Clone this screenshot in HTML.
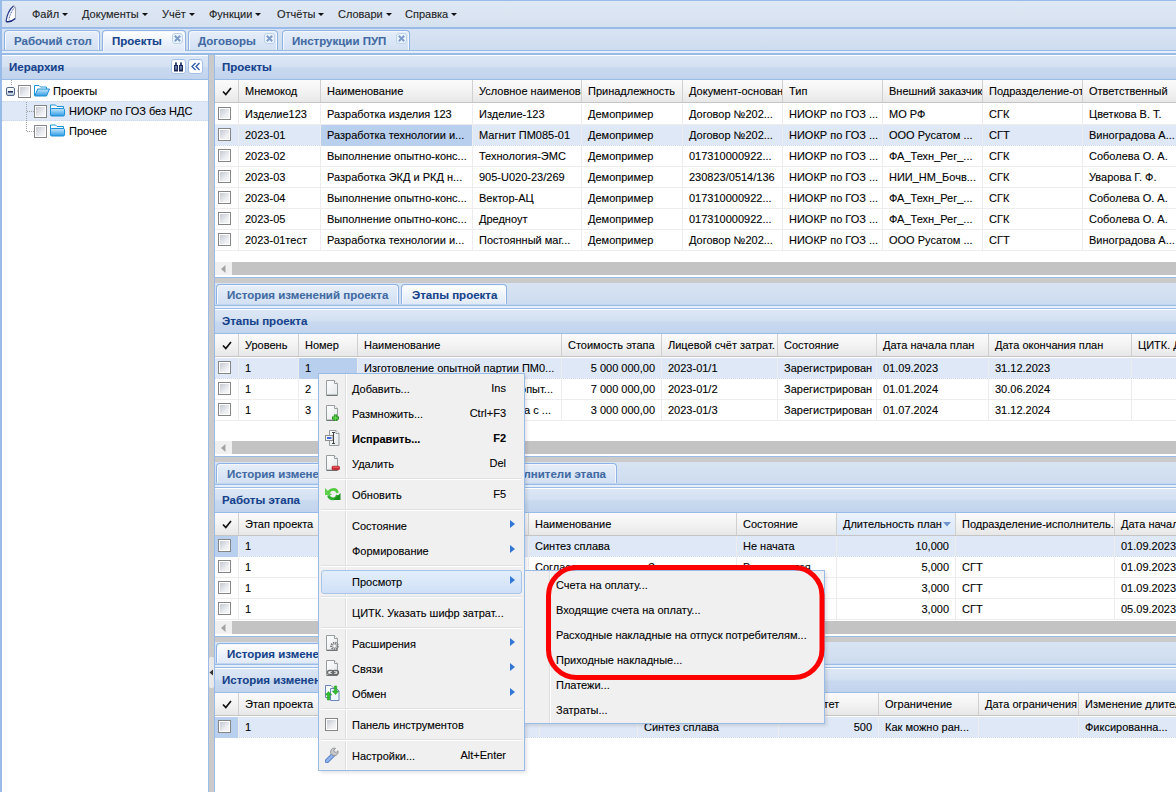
<!DOCTYPE html><html><head><meta charset="utf-8"><title>UI</title><style>
*{margin:0;padding:0;box-sizing:border-box}
html,body{width:1176px;height:792px;overflow:hidden;background:#fff}
body{position:relative;font-family:"Liberation Sans",sans-serif;font-size:11px;color:#000;-webkit-text-stroke:0.1px currentColor}
div{position:absolute}
.t{white-space:nowrap}
.ph{background:linear-gradient(#dce7f5 0%,#d4e1f2 45%,#c8d9ef 52%,#c2d4ed 100%);border-top:1px solid #fff;border-bottom:1px solid #99bbe8}
.pht{font-weight:bold;font-size:11.5px;color:#15428b;white-space:nowrap}
.gh{background:linear-gradient(#fbfbfb 0%,#f3f3f3 50%,#e7e7e7 100%);border-bottom:1px solid #c5c5c5}
.cb{width:13px;height:13px;border:1px solid #858585;background:#fff}
.cb:after{content:"";position:absolute;left:1px;top:1px;width:9px;height:9px;background:linear-gradient(135deg,#c5c9d1,#eceef1 65%,#f7f7f7)}
.tab{border:1px solid #8db2e3;border-bottom:none;border-radius:4px 4px 0 0;background:linear-gradient(#e6eef9,#d2e0f3);box-shadow:inset 1px 1px 0 #f4f8fd,inset -1px 0 0 #f4f8fd}
.tab.act{background:linear-gradient(#ffffff 0%,#eaf1fb 60%,#dfe8f6 100%)}
.tabt{font-weight:bold;font-size:11.5px;color:#416aa3;white-space:nowrap}
.act .tabt{color:#15428b}
.hs{width:1px;background:#d0d0d0}
.rs{width:1px;background:#ededed}
.sel{background:#dfe8f6}
.selc{background:#b8cfee}
.c{white-space:nowrap;overflow:hidden}
.arr{display:inline-block;width:0;height:0;border-left:3px solid transparent;border-right:3px solid transparent;border-top:3.5px solid #111;margin-left:3px;vertical-align:middle;position:relative;top:-1px}
.mi{white-space:nowrap;color:#000}
.sc{white-space:nowrap;text-align:right}
.subarr{width:0;height:0;border-top:4.5px solid transparent;border-bottom:4.5px solid transparent;border-left:5px solid #3277d6}
</style></head><body><div style="left:0px;top:0px;width:1176px;height:27px;background:linear-gradient(#dfe8f5,#d6e1ef);border-top:1px solid #99bbe8"></div>
<div style="left:0px;top:27px;width:1176px;height:2px;background:#99bbe8"></div>
<div style="left:0px;top:29px;width:1176px;height:21px;background:linear-gradient(#d8e4f3,#cddcef)"></div>
<div style="left:0px;top:50px;width:1176px;height:1px;background:#99bbe8"></div>
<div style="left:0px;top:51px;width:1176px;height:2px;background:#e6eef9"></div>
<div style="left:0px;top:53px;width:1176px;height:2px;background:#99bbe8"></div>
<div style="left:0px;top:0px;width:2px;height:792px;background:#99bbe8"></div>
<svg style="position:absolute;left:3px;top:4px" width="16" height="20" viewBox="0 0 16 20"><path d="M10.5 2 C7 5 4 10 3 17.5 C6 17.8 9 16.8 12 14.5 C12.6 10 12.8 5 10.5 2Z" fill="#fff"/><path d="M10.3 1.8 C12 2 12.6 3 12.6 5 L12.3 14.5" fill="none" stroke="#9aa0b0" stroke-width="1"/><path d="M10.5 2 C7 5 4 10 3 17.5" fill="none" stroke="#2b3f8f" stroke-width="1.3"/><path d="M11.5 3.5 C9 6.5 6.5 11 6 15.5" fill="none" stroke="#4d62b0" stroke-width="1" stroke-dasharray="1.2 0.6"/><path d="M3 17.5 C6 18.2 9.5 17 12.3 14.5" fill="none" stroke="#1c2b80" stroke-width="1.5"/></svg>
<div class="t" style="left:32px;top:8px;line-height:13px;color:#222">Файл<span class="arr"></span></div>
<div class="t" style="left:82px;top:8px;line-height:13px;color:#222">Документы<span class="arr"></span></div>
<div class="t" style="left:162px;top:8px;line-height:13px;color:#222">Учёт<span class="arr"></span></div>
<div class="t" style="left:209px;top:8px;line-height:13px;color:#222">Функции<span class="arr"></span></div>
<div class="t" style="left:277px;top:8px;line-height:13px;color:#222">Отчёты<span class="arr"></span></div>
<div class="t" style="left:338px;top:8px;line-height:13px;color:#222">Словари<span class="arr"></span></div>
<div class="t" style="left:405px;top:8px;line-height:13px;color:#222">Справка<span class="arr"></span></div>
<div class="tab" style="left:4px;top:30px;width:96px;height:20px;"><div class="tabt" style="left:9px;top:4px;line-height:13px">Рабочий стол</div></div>
<div class="tab act" style="left:102px;top:30px;width:84px;height:21px;"><div class="tabt" style="left:9px;top:4px;line-height:13px">Проекты</div><div style="left:69px;top:2px;width:11px;height:11px;border:1px solid #bcd1ee;border-radius:3px;background:#eef4fc"><svg style="position:absolute;left:1px;top:1px" width="7" height="7" viewBox="0 0 7 7"><path d="M0.8 0.8L6.2 6.2M6.2 0.8L0.8 6.2" stroke="#7d9dcc" stroke-width="2"/></svg></div></div>
<div class="tab" style="left:188px;top:30px;width:90px;height:20px;"><div class="tabt" style="left:9px;top:4px;line-height:13px">Договоры</div><div style="left:75px;top:2px;width:11px;height:11px;border:1px solid #bcd1ee;border-radius:3px;background:#eef4fc"><svg style="position:absolute;left:1px;top:1px" width="7" height="7" viewBox="0 0 7 7"><path d="M0.8 0.8L6.2 6.2M6.2 0.8L0.8 6.2" stroke="#7d9dcc" stroke-width="2"/></svg></div></div>
<div class="tab" style="left:282px;top:30px;width:128px;height:20px;"><div class="tabt" style="left:9px;top:4px;line-height:13px">Инструкции ПУП</div><div style="left:113px;top:2px;width:11px;height:11px;border:1px solid #bcd1ee;border-radius:3px;background:#eef4fc"><svg style="position:absolute;left:1px;top:1px" width="7" height="7" viewBox="0 0 7 7"><path d="M0.8 0.8L6.2 6.2M6.2 0.8L0.8 6.2" stroke="#7d9dcc" stroke-width="2"/></svg></div></div>
<div class="ph" style="left:2px;top:55px;width:206px;height:25px;"><div class="pht" style="left:7px;top:4px;line-height:14px">Иерархия</div></div>
<div style="left:208px;top:55px;width:1px;height:737px;background:#99bbe8"></div>
<div style="left:171px;top:59px;width:15px;height:15px;border:1px solid #a3c0e8;border-radius:3px;background:#fff"><svg style="position:absolute;left:2px;top:2px" width="10" height="10" viewBox="0 0 10 10"><path d="M1 0.5h2v2.5h1v6.5h-4v-6.5h1zM6 0.5h2v2.5h1v6.5h-4v-6.5h1z" fill="#1d2a58"/><path d="M1.5 4h1v3.5h-1zM6.5 4h1v3.5h-1z" fill="#a9c2f2"/><path d="M1.5 1.2h1v1.5h-1zM6.5 1.2h1v1.5h-1z" fill="#6f8fd8"/></svg></div>
<div style="left:188px;top:59px;width:15px;height:15px;border:1px solid #a3c0e8;border-radius:3px;background:#fff"><svg style="position:absolute;left:1px;top:2px" width="12" height="10" viewBox="0 0 12 10"><path d="M5.5 1L2 4.5L5.5 8M9.5 1L6 4.5L9.5 8" fill="none" stroke="#2c5ba8" stroke-width="1.3"/></svg></div>
<div style="left:2px;top:101px;width:206px;height:20px;background:#dfe8f6;border-top:1px dotted #cdd9ea;border-bottom:1px dotted #cdd9ea"></div>
<svg style="position:absolute;left:2px;top:80px" width="206" height="60" viewBox="0 0 206 60"><path d="M9.5 0v6M24.5 22v30M25 31.5h7M25 51.5h7M15 11h2" stroke="#a0a0a0" stroke-width="1" stroke-dasharray="1 1" fill="none"/></svg>
<div style="left:6px;top:87px;width:9px;height:9px;border:1px solid #56688a;background:linear-gradient(#ffffff,#e4ebf4 50%,#b9c7dc);border-radius:2px"><div style="left:1px;top:3px;width:5px;height:1px;background:#1d2f58;box-shadow:0 1px 0 #6a7896"></div></div>
<div class="cb" style="left:18px;top:85px"></div>
<svg style="position:absolute;left:34px;top:84px" width="16" height="13" viewBox="0 0 16 13"><defs><linearGradient id="fgr" x1="0" y1="0" x2="0" y2="1"><stop offset="0" stop-color="#c6e8fc"/><stop offset="1" stop-color="#2f9be6"/></linearGradient></defs><path d="M0.5 11.5v-10h4.5l1.5 1.5h6v2.5" fill="#fff" stroke="#1b93d6"/><path d="M0.7 12l3-7h11.8l-3 7z" fill="url(#fgr)" stroke="#1b8fd6" stroke-linejoin="round"/></svg>
<div class="t" style="left:53px;top:85px;line-height:13px;">Проекты</div>
<div class="cb" style="left:34px;top:105px"></div>
<svg style="position:absolute;left:50px;top:104px" width="16" height="13" viewBox="0 0 16 13"><defs><linearGradient id="fgr" x1="0" y1="0" x2="0" y2="1"><stop offset="0" stop-color="#c6e8fc"/><stop offset="1" stop-color="#2f9be6"/></linearGradient></defs><path d="M0.5 11v-10h5l1.5 1.5h6.5v3" fill="#fff" stroke="#1b93d6"/><rect x="0.5" y="4.5" width="14" height="7.5" rx="1.2" fill="url(#fgr)" stroke="#1b8fd6"/></svg>
<div class="t" style="left:69px;top:105px;line-height:13px;">НИОКР по ГОЗ без НДС</div>
<div class="cb" style="left:34px;top:125px"></div>
<svg style="position:absolute;left:50px;top:124px" width="16" height="13" viewBox="0 0 16 13"><defs><linearGradient id="fgr" x1="0" y1="0" x2="0" y2="1"><stop offset="0" stop-color="#c6e8fc"/><stop offset="1" stop-color="#2f9be6"/></linearGradient></defs><path d="M0.5 11v-10h5l1.5 1.5h6.5v3" fill="#fff" stroke="#1b93d6"/><rect x="0.5" y="4.5" width="14" height="7.5" rx="1.2" fill="url(#fgr)" stroke="#1b8fd6"/></svg>
<div class="t" style="left:69px;top:125px;line-height:13px;">Прочее</div>
<div style="left:209px;top:55px;width:5px;height:737px;background:#cacaca"></div>
<div style="left:214px;top:55px;width:1px;height:737px;background:#99bbe8"></div>
<div class="ph" style="left:215px;top:55px;width:961px;height:25px;"><div class="pht" style="left:7px;top:4px;line-height:14px">Проекты</div></div>
<div class="gh" style="left:215px;top:80px;width:961px;height:23px;"></div>
<div style="left:215px;top:80px;width:23px;height:23px"><svg style="position:absolute;left:7px;top:7px" width="10" height="9" viewBox="0 0 10 9"><path d="M1 4.5L3.8 7.5L9 1" fill="none" stroke="#111" stroke-width="1.7"/></svg></div>
<div class="hs" style="left:238px;top:80px;height:22px"></div>
<div class="c" style="left:239px;top:85px;width:81px;line-height:13px;padding-left:6px">Мнемокод</div>
<div class="hs" style="left:320px;top:80px;height:22px"></div>
<div class="c" style="left:321px;top:85px;width:151px;line-height:13px;padding-left:6px">Наименование</div>
<div class="hs" style="left:472px;top:80px;height:22px"></div>
<div class="c" style="left:473px;top:85px;width:108px;line-height:13px;padding-left:6px">Условное наименование</div>
<div class="hs" style="left:581px;top:80px;height:22px"></div>
<div class="c" style="left:582px;top:85px;width:100px;line-height:13px;padding-left:6px">Принадлежность</div>
<div class="hs" style="left:682px;top:80px;height:22px"></div>
<div class="c" style="left:683px;top:85px;width:99px;line-height:13px;padding-left:6px">Документ-основание</div>
<div class="hs" style="left:782px;top:80px;height:22px"></div>
<div class="c" style="left:783px;top:85px;width:99px;line-height:13px;padding-left:6px">Тип</div>
<div class="hs" style="left:882px;top:80px;height:22px"></div>
<div class="c" style="left:883px;top:85px;width:99px;line-height:13px;padding-left:6px">Внешний заказчик</div>
<div class="hs" style="left:982px;top:80px;height:22px"></div>
<div class="c" style="left:983px;top:85px;width:99px;line-height:13px;padding-left:6px">Подразделение-ответственный</div>
<div class="hs" style="left:1082px;top:80px;height:22px"></div>
<div class="c" style="left:1083px;top:85px;width:93px;line-height:13px;padding-left:6px">Ответственный</div>
<div style="left:215px;top:124px;width:961px;height:1px;background:#ededed"></div>
<div class="cb" style="left:218px;top:107px"></div>
<div class="rs" style="left:238px;top:104px;height:20px"></div>
<div class="c" style="left:239px;top:108px;width:81px;line-height:13px;padding-left:6px">Изделие123</div>
<div class="rs" style="left:320px;top:104px;height:20px"></div>
<div class="c" style="left:321px;top:108px;width:151px;line-height:13px;padding-left:6px">Разработка изделия 123</div>
<div class="rs" style="left:472px;top:104px;height:20px"></div>
<div class="c" style="left:473px;top:108px;width:108px;line-height:13px;padding-left:6px">Изделие-123</div>
<div class="rs" style="left:581px;top:104px;height:20px"></div>
<div class="c" style="left:582px;top:108px;width:100px;line-height:13px;padding-left:6px">Демопример</div>
<div class="rs" style="left:682px;top:104px;height:20px"></div>
<div class="c" style="left:683px;top:108px;width:99px;line-height:13px;padding-left:6px">Договор №202...</div>
<div class="rs" style="left:782px;top:104px;height:20px"></div>
<div class="c" style="left:783px;top:108px;width:99px;line-height:13px;padding-left:6px">НИОКР по ГОЗ ...</div>
<div class="rs" style="left:882px;top:104px;height:20px"></div>
<div class="c" style="left:883px;top:108px;width:99px;line-height:13px;padding-left:6px">МО РФ</div>
<div class="rs" style="left:982px;top:104px;height:20px"></div>
<div class="c" style="left:983px;top:108px;width:99px;line-height:13px;padding-left:6px">СГК</div>
<div class="rs" style="left:1082px;top:104px;height:20px"></div>
<div class="c" style="left:1083px;top:108px;width:93px;line-height:13px;padding-left:6px">Цветкова В. Т.</div>
<div style="left:215px;top:125px;width:961px;height:20px;background:#dfe8f6"></div>
<div style="left:215px;top:145px;width:961px;height:1px;background:repeating-linear-gradient(90deg,#cbd8ea 0 1px,#f4f7fb 1px 2px)"></div>
<div style="left:321px;top:125px;width:151px;height:21px;background:#b8cfee"></div>
<div class="cb" style="left:218px;top:128px"></div>
<div class="rs" style="left:238px;top:125px;height:20px"></div>
<div class="c" style="left:239px;top:129px;width:81px;line-height:13px;padding-left:6px">2023-01</div>
<div class="rs" style="left:320px;top:125px;height:20px"></div>
<div class="c" style="left:321px;top:129px;width:151px;line-height:13px;padding-left:6px">Разработка технологии и...</div>
<div class="rs" style="left:472px;top:125px;height:20px"></div>
<div class="c" style="left:473px;top:129px;width:108px;line-height:13px;padding-left:6px">Магнит ПМ085-01</div>
<div class="rs" style="left:581px;top:125px;height:20px"></div>
<div class="c" style="left:582px;top:129px;width:100px;line-height:13px;padding-left:6px">Демопример</div>
<div class="rs" style="left:682px;top:125px;height:20px"></div>
<div class="c" style="left:683px;top:129px;width:99px;line-height:13px;padding-left:6px">Договор №202...</div>
<div class="rs" style="left:782px;top:125px;height:20px"></div>
<div class="c" style="left:783px;top:129px;width:99px;line-height:13px;padding-left:6px">НИОКР по ГОЗ ...</div>
<div class="rs" style="left:882px;top:125px;height:20px"></div>
<div class="c" style="left:883px;top:129px;width:99px;line-height:13px;padding-left:6px">ООО Русатом ...</div>
<div class="rs" style="left:982px;top:125px;height:20px"></div>
<div class="c" style="left:983px;top:129px;width:99px;line-height:13px;padding-left:6px">СГТ</div>
<div class="rs" style="left:1082px;top:125px;height:20px"></div>
<div class="c" style="left:1083px;top:129px;width:93px;line-height:13px;padding-left:6px">Виноградова А...</div>
<div style="left:215px;top:166px;width:961px;height:1px;background:#ededed"></div>
<div class="cb" style="left:218px;top:149px"></div>
<div class="rs" style="left:238px;top:146px;height:20px"></div>
<div class="c" style="left:239px;top:150px;width:81px;line-height:13px;padding-left:6px">2023-02</div>
<div class="rs" style="left:320px;top:146px;height:20px"></div>
<div class="c" style="left:321px;top:150px;width:151px;line-height:13px;padding-left:6px">Выполнение опытно-конс...</div>
<div class="rs" style="left:472px;top:146px;height:20px"></div>
<div class="c" style="left:473px;top:150px;width:108px;line-height:13px;padding-left:6px">Технология-ЭМС</div>
<div class="rs" style="left:581px;top:146px;height:20px"></div>
<div class="c" style="left:582px;top:150px;width:100px;line-height:13px;padding-left:6px">Демопример</div>
<div class="rs" style="left:682px;top:146px;height:20px"></div>
<div class="c" style="left:683px;top:150px;width:99px;line-height:13px;padding-left:6px">017310000922...</div>
<div class="rs" style="left:782px;top:146px;height:20px"></div>
<div class="c" style="left:783px;top:150px;width:99px;line-height:13px;padding-left:6px">НИОКР по ГОЗ ...</div>
<div class="rs" style="left:882px;top:146px;height:20px"></div>
<div class="c" style="left:883px;top:150px;width:99px;line-height:13px;padding-left:6px">ФА_Техн_Рег_...</div>
<div class="rs" style="left:982px;top:146px;height:20px"></div>
<div class="c" style="left:983px;top:150px;width:99px;line-height:13px;padding-left:6px">СГК</div>
<div class="rs" style="left:1082px;top:146px;height:20px"></div>
<div class="c" style="left:1083px;top:150px;width:93px;line-height:13px;padding-left:6px">Соболева О. А.</div>
<div style="left:215px;top:187px;width:961px;height:1px;background:#ededed"></div>
<div class="cb" style="left:218px;top:170px"></div>
<div class="rs" style="left:238px;top:167px;height:20px"></div>
<div class="c" style="left:239px;top:171px;width:81px;line-height:13px;padding-left:6px">2023-03</div>
<div class="rs" style="left:320px;top:167px;height:20px"></div>
<div class="c" style="left:321px;top:171px;width:151px;line-height:13px;padding-left:6px">Разработка ЭКД и РКД н...</div>
<div class="rs" style="left:472px;top:167px;height:20px"></div>
<div class="c" style="left:473px;top:171px;width:108px;line-height:13px;padding-left:6px">905-U020-23/269</div>
<div class="rs" style="left:581px;top:167px;height:20px"></div>
<div class="c" style="left:582px;top:171px;width:100px;line-height:13px;padding-left:6px">Демопример</div>
<div class="rs" style="left:682px;top:167px;height:20px"></div>
<div class="c" style="left:683px;top:171px;width:99px;line-height:13px;padding-left:6px">230823/0514/136</div>
<div class="rs" style="left:782px;top:167px;height:20px"></div>
<div class="c" style="left:783px;top:171px;width:99px;line-height:13px;padding-left:6px">НИОКР по ГОЗ ...</div>
<div class="rs" style="left:882px;top:167px;height:20px"></div>
<div class="c" style="left:883px;top:171px;width:99px;line-height:13px;padding-left:6px">НИИ_НМ_Бочв...</div>
<div class="rs" style="left:982px;top:167px;height:20px"></div>
<div class="c" style="left:983px;top:171px;width:99px;line-height:13px;padding-left:6px">СГК</div>
<div class="rs" style="left:1082px;top:167px;height:20px"></div>
<div class="c" style="left:1083px;top:171px;width:93px;line-height:13px;padding-left:6px">Уварова Г. Ф.</div>
<div style="left:215px;top:208px;width:961px;height:1px;background:#ededed"></div>
<div class="cb" style="left:218px;top:191px"></div>
<div class="rs" style="left:238px;top:188px;height:20px"></div>
<div class="c" style="left:239px;top:192px;width:81px;line-height:13px;padding-left:6px">2023-04</div>
<div class="rs" style="left:320px;top:188px;height:20px"></div>
<div class="c" style="left:321px;top:192px;width:151px;line-height:13px;padding-left:6px">Выполнение опытно-конс...</div>
<div class="rs" style="left:472px;top:188px;height:20px"></div>
<div class="c" style="left:473px;top:192px;width:108px;line-height:13px;padding-left:6px">Вектор-АЦ</div>
<div class="rs" style="left:581px;top:188px;height:20px"></div>
<div class="c" style="left:582px;top:192px;width:100px;line-height:13px;padding-left:6px">Демопример</div>
<div class="rs" style="left:682px;top:188px;height:20px"></div>
<div class="c" style="left:683px;top:192px;width:99px;line-height:13px;padding-left:6px">017310000922...</div>
<div class="rs" style="left:782px;top:188px;height:20px"></div>
<div class="c" style="left:783px;top:192px;width:99px;line-height:13px;padding-left:6px">НИОКР по ГОЗ ...</div>
<div class="rs" style="left:882px;top:188px;height:20px"></div>
<div class="c" style="left:883px;top:192px;width:99px;line-height:13px;padding-left:6px">ФА_Техн_Рег_...</div>
<div class="rs" style="left:982px;top:188px;height:20px"></div>
<div class="c" style="left:983px;top:192px;width:99px;line-height:13px;padding-left:6px">СГК</div>
<div class="rs" style="left:1082px;top:188px;height:20px"></div>
<div class="c" style="left:1083px;top:192px;width:93px;line-height:13px;padding-left:6px">Соболева О. А.</div>
<div style="left:215px;top:229px;width:961px;height:1px;background:#ededed"></div>
<div class="cb" style="left:218px;top:212px"></div>
<div class="rs" style="left:238px;top:209px;height:20px"></div>
<div class="c" style="left:239px;top:213px;width:81px;line-height:13px;padding-left:6px">2023-05</div>
<div class="rs" style="left:320px;top:209px;height:20px"></div>
<div class="c" style="left:321px;top:213px;width:151px;line-height:13px;padding-left:6px">Выполнение опытно-конс...</div>
<div class="rs" style="left:472px;top:209px;height:20px"></div>
<div class="c" style="left:473px;top:213px;width:108px;line-height:13px;padding-left:6px">Дредноут</div>
<div class="rs" style="left:581px;top:209px;height:20px"></div>
<div class="c" style="left:582px;top:213px;width:100px;line-height:13px;padding-left:6px">Демопример</div>
<div class="rs" style="left:682px;top:209px;height:20px"></div>
<div class="c" style="left:683px;top:213px;width:99px;line-height:13px;padding-left:6px">017310000922...</div>
<div class="rs" style="left:782px;top:209px;height:20px"></div>
<div class="c" style="left:783px;top:213px;width:99px;line-height:13px;padding-left:6px">НИОКР по ГОЗ ...</div>
<div class="rs" style="left:882px;top:209px;height:20px"></div>
<div class="c" style="left:883px;top:213px;width:99px;line-height:13px;padding-left:6px">ФА_Техн_Рег_...</div>
<div class="rs" style="left:982px;top:209px;height:20px"></div>
<div class="c" style="left:983px;top:213px;width:99px;line-height:13px;padding-left:6px">СГК</div>
<div class="rs" style="left:1082px;top:209px;height:20px"></div>
<div class="c" style="left:1083px;top:213px;width:93px;line-height:13px;padding-left:6px">Соболева О. А.</div>
<div style="left:215px;top:250px;width:961px;height:1px;background:#ededed"></div>
<div class="cb" style="left:218px;top:233px"></div>
<div class="rs" style="left:238px;top:230px;height:20px"></div>
<div class="c" style="left:239px;top:234px;width:81px;line-height:13px;padding-left:6px">2023-01тест</div>
<div class="rs" style="left:320px;top:230px;height:20px"></div>
<div class="c" style="left:321px;top:234px;width:151px;line-height:13px;padding-left:6px">Разработка технологии и...</div>
<div class="rs" style="left:472px;top:230px;height:20px"></div>
<div class="c" style="left:473px;top:234px;width:108px;line-height:13px;padding-left:6px">Постоянный маг...</div>
<div class="rs" style="left:581px;top:230px;height:20px"></div>
<div class="c" style="left:582px;top:234px;width:100px;line-height:13px;padding-left:6px">Демопример</div>
<div class="rs" style="left:682px;top:230px;height:20px"></div>
<div class="c" style="left:683px;top:234px;width:99px;line-height:13px;padding-left:6px">Договор №202...</div>
<div class="rs" style="left:782px;top:230px;height:20px"></div>
<div class="c" style="left:783px;top:234px;width:99px;line-height:13px;padding-left:6px">НИОКР по ГОЗ ...</div>
<div class="rs" style="left:882px;top:230px;height:20px"></div>
<div class="c" style="left:883px;top:234px;width:99px;line-height:13px;padding-left:6px">ООО Русатом ...</div>
<div class="rs" style="left:982px;top:230px;height:20px"></div>
<div class="c" style="left:983px;top:234px;width:99px;line-height:13px;padding-left:6px">СГТ</div>
<div class="rs" style="left:1082px;top:230px;height:20px"></div>
<div class="c" style="left:1083px;top:234px;width:93px;line-height:13px;padding-left:6px">Виноградова А...</div>
<div style="left:215px;top:262px;width:961px;height:13px;background:#c3c3c3"></div>
<div style="left:215px;top:262px;width:17px;height:13px;background:#f0f0f0"></div>
<svg style="position:absolute;left:221px;top:265px" width="5" height="8" viewBox="0 0 5 8"><path d="M4.5 0v8L0 4z" fill="#a3a3a3"/></svg>
<div style="left:215px;top:277px;width:961px;height:1px;background:#99bbe8"></div>
<div style="left:215px;top:278px;width:961px;height:5px;background:#cacaca"></div>
<div style="left:215px;top:283px;width:961px;height:21px;background:linear-gradient(#d8e4f3,#cddcef)"></div>
<div class="tab" style="left:216px;top:284px;width:183px;height:20px;"><div class="tabt" style="left:10px;top:4px;line-height:13px">История изменений проекта</div></div>
<div class="tab act" style="left:401px;top:284px;width:106px;height:21px;"><div class="tabt" style="left:10px;top:4px;line-height:13px">Этапы проекта</div></div>
<div style="left:215px;top:304px;width:961px;height:1px;background:#c2d5ee"></div>
<div style="left:215px;top:305px;width:961px;height:1px;background:#99bbe8"></div>
<div style="left:215px;top:306px;width:961px;height:2px;background:#e6eef9"></div>
<div style="left:215px;top:308px;width:961px;height:1px;background:#99bbe8"></div>
<div class="ph" style="left:215px;top:309px;width:961px;height:25px;"><div class="pht" style="left:7px;top:4px;line-height:14px">Этапы проекта</div></div>
<div class="gh" style="left:215px;top:334px;width:961px;height:23px;"></div>
<div style="left:215px;top:334px;width:23px;height:23px"><svg style="position:absolute;left:7px;top:7px" width="10" height="9" viewBox="0 0 10 9"><path d="M1 4.5L3.8 7.5L9 1" fill="none" stroke="#111" stroke-width="1.7"/></svg></div>
<div class="hs" style="left:238px;top:334px;height:22px"></div>
<div class="c" style="left:239px;top:339px;width:59px;line-height:13px;padding-left:6px">Уровень</div>
<div class="hs" style="left:298px;top:334px;height:22px"></div>
<div class="c" style="left:299px;top:339px;width:58px;line-height:13px;padding-left:6px">Номер</div>
<div class="hs" style="left:357px;top:334px;height:22px"></div>
<div class="c" style="left:358px;top:339px;width:203px;line-height:13px;padding-left:6px">Наименование</div>
<div class="hs" style="left:561px;top:334px;height:22px"></div>
<div class="c" style="left:562px;top:339px;width:99px;line-height:13px;padding-left:6px">Стоимость этапа</div>
<div class="hs" style="left:661px;top:334px;height:22px"></div>
<div class="c" style="left:662px;top:339px;width:115px;line-height:13px;padding-left:6px">Лицевой счёт затрат.</div>
<div class="hs" style="left:777px;top:334px;height:22px"></div>
<div class="c" style="left:778px;top:339px;width:98px;line-height:13px;padding-left:6px">Состояние</div>
<div class="hs" style="left:876px;top:334px;height:22px"></div>
<div class="c" style="left:877px;top:339px;width:111px;line-height:13px;padding-left:6px">Дата начала план</div>
<div class="hs" style="left:988px;top:334px;height:22px"></div>
<div class="c" style="left:989px;top:339px;width:142px;line-height:13px;padding-left:6px">Дата окончания план</div>
<div class="hs" style="left:1131px;top:334px;height:22px"></div>
<div class="c" style="left:1132px;top:339px;width:44px;line-height:13px;padding-left:6px">ЦИТК. Дата</div>
<div style="left:215px;top:358px;width:961px;height:20px;background:#dfe8f6"></div>
<div style="left:215px;top:378px;width:961px;height:1px;background:repeating-linear-gradient(90deg,#cbd8ea 0 1px,#f4f7fb 1px 2px)"></div>
<div style="left:299px;top:358px;width:58px;height:21px;background:#b8cfee"></div>
<div class="cb" style="left:218px;top:361px"></div>
<div class="rs" style="left:238px;top:358px;height:20px"></div>
<div class="c" style="left:239px;top:362px;width:59px;line-height:13px;padding-left:6px">1</div>
<div class="rs" style="left:298px;top:358px;height:20px"></div>
<div class="c" style="left:299px;top:362px;width:58px;line-height:13px;padding-left:6px">1</div>
<div class="rs" style="left:357px;top:358px;height:20px"></div>
<div class="c" style="left:358px;top:362px;width:203px;line-height:13px;padding-left:6px">Изготовление опытной партии ПМ0...</div>
<div class="rs" style="left:561px;top:358px;height:20px"></div>
<div class="c" style="left:562px;top:362px;width:99px;line-height:13px;padding-right:6px;text-align:right">5 000 000,00</div>
<div class="rs" style="left:661px;top:358px;height:20px"></div>
<div class="c" style="left:662px;top:362px;width:115px;line-height:13px;padding-left:6px">2023-01/1</div>
<div class="rs" style="left:777px;top:358px;height:20px"></div>
<div class="c" style="left:778px;top:362px;width:98px;line-height:13px;padding-left:6px">Зарегистрирован</div>
<div class="rs" style="left:876px;top:358px;height:20px"></div>
<div class="c" style="left:877px;top:362px;width:111px;line-height:13px;padding-left:6px">01.09.2023</div>
<div class="rs" style="left:988px;top:358px;height:20px"></div>
<div class="c" style="left:989px;top:362px;width:142px;line-height:13px;padding-left:6px">31.12.2023</div>
<div class="rs" style="left:1131px;top:358px;height:20px"></div>
<div style="left:215px;top:399px;width:961px;height:1px;background:#ededed"></div>
<div class="cb" style="left:218px;top:382px"></div>
<div class="rs" style="left:238px;top:379px;height:20px"></div>
<div class="c" style="left:239px;top:383px;width:59px;line-height:13px;padding-left:6px">1</div>
<div class="rs" style="left:298px;top:379px;height:20px"></div>
<div class="c" style="left:299px;top:383px;width:58px;line-height:13px;padding-left:6px">2</div>
<div class="rs" style="left:357px;top:379px;height:20px"></div>
<div class="c" style="left:358px;top:383px;width:203px;line-height:13px;padding-right:8px;text-align:right">Изготовление и испытания опыт...</div>
<div class="rs" style="left:561px;top:379px;height:20px"></div>
<div class="c" style="left:562px;top:383px;width:99px;line-height:13px;padding-right:6px;text-align:right">7 000 000,00</div>
<div class="rs" style="left:661px;top:379px;height:20px"></div>
<div class="c" style="left:662px;top:383px;width:115px;line-height:13px;padding-left:6px">2023-01/2</div>
<div class="rs" style="left:777px;top:379px;height:20px"></div>
<div class="c" style="left:778px;top:383px;width:98px;line-height:13px;padding-left:6px">Зарегистрирован</div>
<div class="rs" style="left:876px;top:379px;height:20px"></div>
<div class="c" style="left:877px;top:383px;width:111px;line-height:13px;padding-left:6px">01.01.2024</div>
<div class="rs" style="left:988px;top:379px;height:20px"></div>
<div class="c" style="left:989px;top:383px;width:142px;line-height:13px;padding-left:6px">30.06.2024</div>
<div class="rs" style="left:1131px;top:379px;height:20px"></div>
<div style="left:215px;top:420px;width:961px;height:1px;background:#ededed"></div>
<div class="cb" style="left:218px;top:403px"></div>
<div class="rs" style="left:238px;top:400px;height:20px"></div>
<div class="c" style="left:239px;top:404px;width:59px;line-height:13px;padding-left:6px">1</div>
<div class="rs" style="left:298px;top:400px;height:20px"></div>
<div class="c" style="left:299px;top:404px;width:58px;line-height:13px;padding-left:6px">3</div>
<div class="rs" style="left:357px;top:400px;height:20px"></div>
<div class="c" style="left:358px;top:404px;width:203px;line-height:13px;padding-right:10px;text-align:right">Разработка КД и приёмка с ...</div>
<div class="rs" style="left:561px;top:400px;height:20px"></div>
<div class="c" style="left:562px;top:404px;width:99px;line-height:13px;padding-right:6px;text-align:right">3 000 000,00</div>
<div class="rs" style="left:661px;top:400px;height:20px"></div>
<div class="c" style="left:662px;top:404px;width:115px;line-height:13px;padding-left:6px">2023-01/3</div>
<div class="rs" style="left:777px;top:400px;height:20px"></div>
<div class="c" style="left:778px;top:404px;width:98px;line-height:13px;padding-left:6px">Зарегистрирован</div>
<div class="rs" style="left:876px;top:400px;height:20px"></div>
<div class="c" style="left:877px;top:404px;width:111px;line-height:13px;padding-left:6px">01.07.2024</div>
<div class="rs" style="left:988px;top:400px;height:20px"></div>
<div class="c" style="left:989px;top:404px;width:142px;line-height:13px;padding-left:6px">31.12.2024</div>
<div class="rs" style="left:1131px;top:400px;height:20px"></div>
<div style="left:215px;top:441px;width:961px;height:13px;background:#c3c3c3"></div>
<div style="left:215px;top:441px;width:17px;height:13px;background:#f0f0f0"></div>
<svg style="position:absolute;left:221px;top:444px" width="5" height="8" viewBox="0 0 5 8"><path d="M4.5 0v8L0 4z" fill="#a3a3a3"/></svg>
<div style="left:215px;top:456px;width:961px;height:1px;background:#99bbe8"></div>
<div style="left:215px;top:457px;width:961px;height:6px;background:#cacaca"></div>
<div style="left:215px;top:462px;width:961px;height:21px;background:linear-gradient(#d8e4f3,#cddcef)"></div>
<div class="tab" style="left:216px;top:463px;width:183px;height:20px;"><div class="tabt" style="left:10px;top:4px;line-height:13px">История изменений этапа</div></div>
<div class="tab" style="left:401px;top:463px;width:216px;height:20px;"><div class="tabt" style="right:10px;top:4px;line-height:13px">Исполнители этапа</div></div>
<div style="left:215px;top:483px;width:961px;height:1px;background:#c2d5ee"></div>
<div style="left:215px;top:484px;width:961px;height:1px;background:#99bbe8"></div>
<div style="left:215px;top:485px;width:961px;height:2px;background:#e6eef9"></div>
<div style="left:215px;top:487px;width:961px;height:1px;background:#99bbe8"></div>
<div class="ph" style="left:215px;top:488px;width:961px;height:25px;"><div class="pht" style="left:7px;top:4px;line-height:14px">Работы этапа</div></div>
<div class="gh" style="left:215px;top:513px;width:961px;height:23px;"></div>
<div style="left:215px;top:513px;width:23px;height:23px"><svg style="position:absolute;left:7px;top:7px" width="10" height="9" viewBox="0 0 10 9"><path d="M1 4.5L3.8 7.5L9 1" fill="none" stroke="#111" stroke-width="1.7"/></svg></div>
<div class="hs" style="left:238px;top:513px;height:22px"></div>
<div class="c" style="left:239px;top:518px;width:101px;line-height:13px;padding-left:6px">Этап проекта</div>
<div class="hs" style="left:340px;top:513px;height:22px"></div>
<div class="c" style="left:341px;top:518px;width:187px;line-height:13px;padding-left:6px">Код</div>
<div class="hs" style="left:528px;top:513px;height:22px"></div>
<div class="c" style="left:529px;top:518px;width:207px;line-height:13px;padding-left:6px">Наименование</div>
<div class="hs" style="left:736px;top:513px;height:22px"></div>
<div class="c" style="left:737px;top:518px;width:99px;line-height:13px;padding-left:6px">Состояние</div>
<div class="hs" style="left:836px;top:513px;height:22px"></div>
<div style="left:837px;top:513px;width:118px;height:22px;background:linear-gradient(#ebf3fd,#dae7f8)"></div>
<svg style="position:absolute;left:943px;top:522px" width="8" height="5" viewBox="0 0 8 5"><path d="M0 0h8L4 4.5z" fill="#6d96cf"/></svg>
<div class="c" style="left:837px;top:518px;width:118px;line-height:13px;padding-left:6px">Длительность план</div>
<div class="hs" style="left:955px;top:513px;height:22px"></div>
<div class="c" style="left:956px;top:518px;width:158px;line-height:13px;padding-left:6px">Подразделение-исполнитель...</div>
<div class="hs" style="left:1114px;top:513px;height:22px"></div>
<div class="c" style="left:1115px;top:518px;width:61px;line-height:13px;padding-left:6px">Дата начала план</div>
<div style="left:215px;top:536px;width:961px;height:20px;background:#dfe8f6"></div>
<div style="left:215px;top:556px;width:961px;height:1px;background:repeating-linear-gradient(90deg,#cbd8ea 0 1px,#f4f7fb 1px 2px)"></div>
<div style="left:215px;top:536px;width:23px;height:21px;background:#b8cfee"></div>
<div class="cb" style="left:218px;top:539px"></div>
<div class="rs" style="left:238px;top:536px;height:20px"></div>
<div class="c" style="left:239px;top:540px;width:101px;line-height:13px;padding-left:6px">1</div>
<div class="rs" style="left:340px;top:536px;height:20px"></div>
<div class="rs" style="left:528px;top:536px;height:20px"></div>
<div class="c" style="left:529px;top:540px;width:207px;line-height:13px;padding-left:6px">Синтез сплава</div>
<div class="rs" style="left:736px;top:536px;height:20px"></div>
<div class="c" style="left:737px;top:540px;width:99px;line-height:13px;padding-left:6px">Не начата</div>
<div class="rs" style="left:836px;top:536px;height:20px"></div>
<div class="c" style="left:837px;top:540px;width:118px;line-height:13px;padding-right:6px;text-align:right">10,000</div>
<div class="rs" style="left:955px;top:536px;height:20px"></div>
<div class="rs" style="left:1114px;top:536px;height:20px"></div>
<div class="c" style="left:1115px;top:540px;width:61px;line-height:13px;padding-left:6px">01.09.2023</div>
<div style="left:215px;top:577px;width:961px;height:1px;background:#ededed"></div>
<div class="cb" style="left:218px;top:560px"></div>
<div class="rs" style="left:238px;top:557px;height:20px"></div>
<div class="c" style="left:239px;top:561px;width:101px;line-height:13px;padding-left:6px">1</div>
<div class="rs" style="left:340px;top:557px;height:20px"></div>
<div class="rs" style="left:528px;top:557px;height:20px"></div>
<div class="c" style="left:529px;top:561px;width:207px;line-height:13px;padding-left:6px">Согласовать состав с Заказчиком</div>
<div class="rs" style="left:736px;top:557px;height:20px"></div>
<div class="c" style="left:737px;top:561px;width:99px;line-height:13px;padding-left:6px">Выполняется</div>
<div class="rs" style="left:836px;top:557px;height:20px"></div>
<div class="c" style="left:837px;top:561px;width:118px;line-height:13px;padding-right:6px;text-align:right">5,000</div>
<div class="rs" style="left:955px;top:557px;height:20px"></div>
<div class="c" style="left:956px;top:561px;width:158px;line-height:13px;padding-left:6px">СГТ</div>
<div class="rs" style="left:1114px;top:557px;height:20px"></div>
<div class="c" style="left:1115px;top:561px;width:61px;line-height:13px;padding-left:6px">01.09.2023</div>
<div style="left:215px;top:598px;width:961px;height:1px;background:#ededed"></div>
<div class="cb" style="left:218px;top:581px"></div>
<div class="rs" style="left:238px;top:578px;height:20px"></div>
<div class="c" style="left:239px;top:582px;width:101px;line-height:13px;padding-left:6px">1</div>
<div class="rs" style="left:340px;top:578px;height:20px"></div>
<div class="rs" style="left:528px;top:578px;height:20px"></div>
<div class="rs" style="left:736px;top:578px;height:20px"></div>
<div class="rs" style="left:836px;top:578px;height:20px"></div>
<div class="c" style="left:837px;top:582px;width:118px;line-height:13px;padding-right:6px;text-align:right">3,000</div>
<div class="rs" style="left:955px;top:578px;height:20px"></div>
<div class="c" style="left:956px;top:582px;width:158px;line-height:13px;padding-left:6px">СГТ</div>
<div class="rs" style="left:1114px;top:578px;height:20px"></div>
<div class="c" style="left:1115px;top:582px;width:61px;line-height:13px;padding-left:6px">01.09.2023</div>
<div style="left:215px;top:619px;width:961px;height:1px;background:#ededed"></div>
<div class="cb" style="left:218px;top:602px"></div>
<div class="rs" style="left:238px;top:599px;height:20px"></div>
<div class="c" style="left:239px;top:603px;width:101px;line-height:13px;padding-left:6px">1</div>
<div class="rs" style="left:340px;top:599px;height:20px"></div>
<div class="rs" style="left:528px;top:599px;height:20px"></div>
<div class="rs" style="left:736px;top:599px;height:20px"></div>
<div class="rs" style="left:836px;top:599px;height:20px"></div>
<div class="c" style="left:837px;top:603px;width:118px;line-height:13px;padding-right:6px;text-align:right">3,000</div>
<div class="rs" style="left:955px;top:599px;height:20px"></div>
<div class="c" style="left:956px;top:603px;width:158px;line-height:13px;padding-left:6px">СГТ</div>
<div class="rs" style="left:1114px;top:599px;height:20px"></div>
<div class="c" style="left:1115px;top:603px;width:61px;line-height:13px;padding-left:6px">05.09.2023</div>
<div style="left:215px;top:621px;width:961px;height:13px;background:#c3c3c3"></div>
<div style="left:215px;top:621px;width:17px;height:13px;background:#f0f0f0"></div>
<svg style="position:absolute;left:221px;top:624px" width="5" height="8" viewBox="0 0 5 8"><path d="M4.5 0v8L0 4z" fill="#a3a3a3"/></svg>
<div style="left:215px;top:636px;width:961px;height:1px;background:#99bbe8"></div>
<div style="left:215px;top:637px;width:961px;height:6px;background:#cacaca"></div>
<div style="left:209px;top:657px;width:5px;height:31px;background:#e9e9e9;border-radius:2px"></div>
<svg style="position:absolute;left:209px;top:669px" width="5" height="7" viewBox="0 0 5 7"><path d="M4 0.5v6L0.5 3.5z" fill="#333"/></svg>
<div style="left:215px;top:642px;width:961px;height:21px;background:linear-gradient(#d8e4f3,#cddcef)"></div>
<div class="tab act" style="left:216px;top:643px;width:300px;height:21px;"><div class="tabt" style="left:10px;top:4px;line-height:13px">История изменений работы</div></div>
<div style="left:215px;top:663px;width:961px;height:1px;background:#c2d5ee"></div>
<div style="left:215px;top:664px;width:961px;height:1px;background:#99bbe8"></div>
<div style="left:215px;top:665px;width:961px;height:2px;background:#e6eef9"></div>
<div style="left:215px;top:667px;width:961px;height:1px;background:#99bbe8"></div>
<div class="ph" style="left:215px;top:668px;width:961px;height:25px;"><div class="pht" style="left:7px;top:4px;line-height:14px">История изменений работы</div></div>
<div class="gh" style="left:215px;top:693px;width:961px;height:23px;"></div>
<div style="left:215px;top:693px;width:23px;height:23px"><svg style="position:absolute;left:7px;top:7px" width="10" height="9" viewBox="0 0 10 9"><path d="M1 4.5L3.8 7.5L9 1" fill="none" stroke="#111" stroke-width="1.7"/></svg></div>
<div class="hs" style="left:238px;top:693px;height:22px"></div>
<div class="c" style="left:239px;top:698px;width:101px;line-height:13px;padding-left:6px">Этап проекта</div>
<div class="hs" style="left:340px;top:693px;height:22px"></div>
<div class="c" style="left:341px;top:698px;width:198px;line-height:13px;padding-left:6px">Код</div>
<div class="hs" style="left:539px;top:693px;height:22px"></div>
<div class="c" style="left:540px;top:698px;width:97px;line-height:13px;padding-left:6px">Код работы</div>
<div class="hs" style="left:637px;top:693px;height:22px"></div>
<div class="c" style="left:638px;top:698px;width:140px;line-height:13px;padding-left:6px">Наименование</div>
<div class="hs" style="left:778px;top:693px;height:22px"></div>
<div class="c" style="left:779px;top:698px;width:99px;line-height:13px;padding-left:6px">Приоритет</div>
<div class="hs" style="left:878px;top:693px;height:22px"></div>
<div class="c" style="left:879px;top:698px;width:99px;line-height:13px;padding-left:6px">Ограничение</div>
<div class="hs" style="left:978px;top:693px;height:22px"></div>
<div class="c" style="left:979px;top:698px;width:99px;line-height:13px;padding-left:6px">Дата ограничения</div>
<div class="hs" style="left:1078px;top:693px;height:22px"></div>
<div class="c" style="left:1079px;top:698px;width:97px;line-height:13px;padding-left:6px">Изменение длительности</div>
<div style="left:215px;top:717px;width:961px;height:20px;background:#dfe8f6"></div>
<div style="left:215px;top:737px;width:961px;height:1px;background:repeating-linear-gradient(90deg,#cbd8ea 0 1px,#f4f7fb 1px 2px)"></div>
<div style="left:215px;top:717px;width:23px;height:21px;background:#b8cfee"></div>
<div class="cb" style="left:218px;top:720px"></div>
<div class="rs" style="left:238px;top:717px;height:20px"></div>
<div class="c" style="left:239px;top:721px;width:101px;line-height:13px;padding-left:6px">1</div>
<div class="rs" style="left:340px;top:717px;height:20px"></div>
<div class="rs" style="left:539px;top:717px;height:20px"></div>
<div class="rs" style="left:637px;top:717px;height:20px"></div>
<div class="c" style="left:638px;top:721px;width:140px;line-height:13px;padding-left:6px">Синтез сплава</div>
<div class="rs" style="left:778px;top:717px;height:20px"></div>
<div class="c" style="left:779px;top:721px;width:99px;line-height:13px;padding-right:6px;text-align:right">500</div>
<div class="rs" style="left:878px;top:717px;height:20px"></div>
<div class="c" style="left:879px;top:721px;width:99px;line-height:13px;padding-left:6px">Как можно ран...</div>
<div class="rs" style="left:978px;top:717px;height:20px"></div>
<div class="rs" style="left:1078px;top:717px;height:20px"></div>
<div class="c" style="left:1079px;top:721px;width:97px;line-height:13px;padding-left:6px">Фиксированна...</div>
<div style="left:320px;top:375px;width:207px;height:398px;background:rgba(0,0,0,0.10);border-radius:3px;filter:blur(1.5px)"></div>
<div style="left:318px;top:373px;width:207px;height:398px;background:#f0f0f0;border:1px solid #99bbe8"></div>
<div style="left:345px;top:374px;width:1px;height:396px;background:#e0e0e0;box-shadow:1px 0 0 #fff"></div>
<svg style="position:absolute;left:325px;top:380px" width="16" height="16" viewBox="0 0 16 16"><defs><linearGradient id="dg" x1="0" y1="0" x2="1" y2="1"><stop offset="0" stop-color="#ffffff"/><stop offset="1" stop-color="#e3e8ea"/></linearGradient><linearGradient id="gg" x1="0" y1="0" x2="0" y2="1"><stop offset="0" stop-color="#8fe36a"/><stop offset="1" stop-color="#23a023"/></linearGradient></defs><path d="M1.5 0.5h8l3 3v11.5h-11z" fill="url(#dg)" stroke="#979d9f"/><path d="M9.5 0.5v3h3" fill="#fff" stroke="#979d9f"/><path d="M1.5 15.5h11" stroke="#6f7577"/></svg>
<div class="mi" style="left:352px;top:383px;line-height:13px;">Добавить...</div>
<div class="sc" style="left:420px;top:382px;width:86px;line-height:13px;">Ins</div>
<svg style="position:absolute;left:325px;top:405px" width="16" height="16" viewBox="0 0 16 16"><defs><linearGradient id="dg" x1="0" y1="0" x2="1" y2="1"><stop offset="0" stop-color="#ffffff"/><stop offset="1" stop-color="#e3e8ea"/></linearGradient><linearGradient id="gg" x1="0" y1="0" x2="0" y2="1"><stop offset="0" stop-color="#8fe36a"/><stop offset="1" stop-color="#23a023"/></linearGradient></defs><path d="M1.5 0.5h8l3 3v11.5h-11z" fill="url(#dg)" stroke="#979d9f"/><path d="M9.5 0.5v3h3" fill="#fff" stroke="#979d9f"/><path d="M1.5 15.5h11" stroke="#6f7577"/><path d="M10.5 9.5v7M7 13h7" stroke="#1c8a1c" stroke-width="3.2"/><path d="M10.5 10.3v5.4M7.8 13h5.4" stroke="#5fd048" stroke-width="1.6"/></svg>
<div class="mi" style="left:352px;top:408px;line-height:13px;">Размножить...</div>
<div class="sc" style="left:420px;top:407px;width:86px;line-height:13px;">Ctrl+F3</div>
<svg style="position:absolute;left:325px;top:430px" width="16" height="16" viewBox="0 0 16 16"><defs><linearGradient id="dg" x1="0" y1="0" x2="1" y2="1"><stop offset="0" stop-color="#ffffff"/><stop offset="1" stop-color="#e3e8ea"/></linearGradient><linearGradient id="gg" x1="0" y1="0" x2="0" y2="1"><stop offset="0" stop-color="#8fe36a"/><stop offset="1" stop-color="#23a023"/></linearGradient></defs><path d="M4.5 0.5h6.5l3 3v12h-9.5z" fill="url(#dg)" stroke="#979d9f"/><path d="M11 0.5v3h3" fill="#fff" stroke="#979d9f"/><rect x="0.5" y="5.5" width="7.5" height="5" fill="#f4f4f4" stroke="#8d8d8d"/><path d="M2 8h4.5" stroke="#2a5ad8" stroke-width="1.8"/><path d="M7 2.5h3M8.5 2.5v11M7 13.5h3" stroke="#333" stroke-width="0.9"/></svg>
<div class="mi" style="left:352px;top:433px;line-height:13px;font-weight:bold;">Исправить...</div>
<div class="sc" style="left:420px;top:432px;width:86px;line-height:13px;font-weight:bold;">F2</div>
<svg style="position:absolute;left:325px;top:455px" width="16" height="16" viewBox="0 0 16 16"><defs><linearGradient id="dg" x1="0" y1="0" x2="1" y2="1"><stop offset="0" stop-color="#ffffff"/><stop offset="1" stop-color="#e3e8ea"/></linearGradient><linearGradient id="gg" x1="0" y1="0" x2="0" y2="1"><stop offset="0" stop-color="#8fe36a"/><stop offset="1" stop-color="#23a023"/></linearGradient></defs><path d="M1.5 0.5h8l3 3v11.5h-11z" fill="url(#dg)" stroke="#979d9f"/><path d="M9.5 0.5v3h3" fill="#fff" stroke="#979d9f"/><path d="M1.5 15.5h11" stroke="#6f7577"/><rect x="7" y="11.2" width="7.5" height="3.6" rx="1" fill="#d0242e" stroke="#a51a22" stroke-width="0.6"/><path d="M8 12.3h5.5" stroke="#f07a80" stroke-width="0.8"/></svg>
<div class="mi" style="left:352px;top:458px;line-height:13px;">Удалить</div>
<div class="sc" style="left:420px;top:457px;width:86px;line-height:13px;">Del</div>
<div style="left:321px;top:478px;width:201px;height:1px;background:#e0e0e0;box-shadow:0 1px 0 #fff"></div>
<svg style="position:absolute;left:325px;top:486px" width="16" height="16" viewBox="0 0 16 16"><defs><linearGradient id="dg" x1="0" y1="0" x2="1" y2="1"><stop offset="0" stop-color="#ffffff"/><stop offset="1" stop-color="#e3e8ea"/></linearGradient><linearGradient id="gg" x1="0" y1="0" x2="0" y2="1"><stop offset="0" stop-color="#8fe36a"/><stop offset="1" stop-color="#23a023"/></linearGradient></defs><path d="M3.6 7.5 A4.6 4.6 0 0 1 12.6 6.8" fill="none" stroke="#52c93e" stroke-width="2.6"/><path d="M0 2v7h7z" fill="#5fd04a"/><path d="M12.4 9 A4.6 4.6 0 0 1 3.4 9.4" fill="none" stroke="#2fae2f" stroke-width="2.6"/><path d="M15.5 7v7h-7z" fill="#1b8f1b"/></svg>
<div class="mi" style="left:352px;top:489px;line-height:13px;">Обновить</div>
<div class="sc" style="left:420px;top:488px;width:86px;line-height:13px;">F5</div>
<div style="left:321px;top:509px;width:201px;height:1px;background:#e0e0e0;box-shadow:0 1px 0 #fff"></div>
<div class="mi" style="left:352px;top:520px;line-height:13px;">Состояние</div>
<div class="subarr" style="left:510px;top:520px"></div>
<div class="mi" style="left:352px;top:545px;line-height:13px;">Формирование</div>
<div class="subarr" style="left:510px;top:545px"></div>
<div style="left:321px;top:565px;width:201px;height:1px;background:#e0e0e0;box-shadow:0 1px 0 #fff"></div>
<div style="left:321px;top:570px;width:201px;height:24px;border:1px solid #a8c6ec;border-radius:3px;background:linear-gradient(#e3eefb,#cfe0f7)"></div>
<div class="mi" style="left:352px;top:576px;line-height:13px;">Просмотр</div>
<div class="subarr" style="left:510px;top:576px"></div>
<div style="left:321px;top:596px;width:201px;height:1px;background:#e0e0e0;box-shadow:0 1px 0 #fff"></div>
<div class="mi" style="left:352px;top:607px;line-height:13px;">ЦИТК. Указать шифр затрат...</div>
<div style="left:321px;top:627px;width:201px;height:1px;background:#e0e0e0;box-shadow:0 1px 0 #fff"></div>
<svg style="position:absolute;left:325px;top:635px" width="16" height="16" viewBox="0 0 16 16"><defs><linearGradient id="dg" x1="0" y1="0" x2="1" y2="1"><stop offset="0" stop-color="#ffffff"/><stop offset="1" stop-color="#e3e8ea"/></linearGradient><linearGradient id="gg" x1="0" y1="0" x2="0" y2="1"><stop offset="0" stop-color="#8fe36a"/><stop offset="1" stop-color="#23a023"/></linearGradient></defs><path d="M1.5 0.5h8l3 3v11.5h-11z" fill="url(#dg)" stroke="#979d9f"/><path d="M9.5 0.5v3h3" fill="#fff" stroke="#979d9f"/><path d="M1.5 15.5h11" stroke="#6f7577"/><circle cx="9.5" cy="11" r="3.2" fill="none" stroke="#7c7c7c" stroke-width="2.2" stroke-dasharray="1.3 0.9"/><circle cx="9.5" cy="11" r="1.8" fill="#fff" stroke="#9a9a9a" stroke-width="0.8"/></svg>
<div class="mi" style="left:352px;top:638px;line-height:13px;">Расширения</div>
<div class="subarr" style="left:510px;top:638px"></div>
<svg style="position:absolute;left:325px;top:660px" width="16" height="16" viewBox="0 0 16 16"><defs><linearGradient id="dg" x1="0" y1="0" x2="1" y2="1"><stop offset="0" stop-color="#ffffff"/><stop offset="1" stop-color="#e3e8ea"/></linearGradient><linearGradient id="gg" x1="0" y1="0" x2="0" y2="1"><stop offset="0" stop-color="#8fe36a"/><stop offset="1" stop-color="#23a023"/></linearGradient></defs><path d="M1.5 0.5h8l3 3v11.5h-11z" fill="url(#dg)" stroke="#979d9f"/><path d="M9.5 0.5v3h3" fill="#fff" stroke="#979d9f"/><path d="M1.5 15.5h11" stroke="#6f7577"/><rect x="2.5" y="10.5" width="6" height="4" rx="2" fill="#fff" fill-opacity="0.6" stroke="#6a6a6a" stroke-width="1.3"/><rect x="7.5" y="10.5" width="6" height="4" rx="2" fill="none" stroke="#6a6a6a" stroke-width="1.3"/><path d="M5.5 12.5h5" stroke="#6a6a6a" stroke-width="1.1"/></svg>
<div class="mi" style="left:352px;top:663px;line-height:13px;">Связи</div>
<div class="subarr" style="left:510px;top:663px"></div>
<svg style="position:absolute;left:325px;top:685px" width="16" height="16" viewBox="0 0 16 16"><defs><linearGradient id="dg" x1="0" y1="0" x2="1" y2="1"><stop offset="0" stop-color="#ffffff"/><stop offset="1" stop-color="#e3e8ea"/></linearGradient><linearGradient id="gg" x1="0" y1="0" x2="0" y2="1"><stop offset="0" stop-color="#8fe36a"/><stop offset="1" stop-color="#23a023"/></linearGradient></defs><path d="M0.5 0.5h5.5l2 2v10h-7.5z" fill="#fff" stroke="#6b86b8"/><path d="M5.5 3.5h6l2.5 2.5v9.5h-8.5z" fill="#eef6fb" stroke="#6b86b8"/><path d="M3.5 6.5l-3.2 3.5h2v5h2.4v-5h2z" fill="#2fbf2f" stroke="#1b8f1b" stroke-width="0.5"/><path d="M10.5 9.5l3.2-3.5h-2v-5h-2.4v5h-2z" fill="#2fbf2f" stroke="#1b8f1b" stroke-width="0.5"/></svg>
<div class="mi" style="left:352px;top:688px;line-height:13px;">Обмен</div>
<div class="subarr" style="left:510px;top:688px"></div>
<div style="left:321px;top:708px;width:201px;height:1px;background:#e0e0e0;box-shadow:0 1px 0 #fff"></div>
<div class="cb" style="left:325px;top:718px"></div>
<div class="mi" style="left:352px;top:719px;line-height:13px;">Панель инструментов</div>
<div style="left:321px;top:739px;width:201px;height:1px;background:#e0e0e0;box-shadow:0 1px 0 #fff"></div>
<svg style="position:absolute;left:325px;top:747px" width="16" height="16" viewBox="0 0 16 16"><defs><linearGradient id="dg" x1="0" y1="0" x2="1" y2="1"><stop offset="0" stop-color="#ffffff"/><stop offset="1" stop-color="#e3e8ea"/></linearGradient><linearGradient id="gg" x1="0" y1="0" x2="0" y2="1"><stop offset="0" stop-color="#8fe36a"/><stop offset="1" stop-color="#23a023"/></linearGradient></defs><path d="M2 14l6.5-6.5" stroke="#4c76c4" stroke-width="4.4" stroke-linecap="round"/><path d="M2 14l6.5-6.5" stroke="#8fb3ea" stroke-width="2.6" stroke-linecap="round"/><path d="M8 8.2a3.6 3.6 0 0 1 2.6-6.8l-1.6 1.8l0.4 1.8l1.8 0.4l1.8-1.6a3.6 3.6 0 0 1-5 4.4z" fill="#c7c9cc" stroke="#85888c" stroke-width="0.8"/></svg>
<div class="mi" style="left:352px;top:750px;line-height:13px;">Настройки...</div>
<div class="sc" style="left:420px;top:749px;width:86px;line-height:13px;">Alt+Enter</div>
<div style="left:526px;top:572px;width:301px;height:154px;background:rgba(0,0,0,0.10);filter:blur(1.5px)"></div>
<div style="left:524px;top:570px;width:301px;height:154px;background:#f0f0f0;border:1px solid #99bbe8"></div>
<div style="left:549px;top:571px;width:1px;height:152px;background:#e0e0e0;box-shadow:1px 0 0 #fff"></div>
<div class="mi" style="left:556px;top:579px;line-height:13px;">Счета на оплату...</div>
<div class="mi" style="left:556px;top:604px;line-height:13px;">Входящие счета на оплату...</div>
<div class="mi" style="left:556px;top:629px;line-height:13px;">Расходные накладные на отпуск потребителям...</div>
<div class="mi" style="left:556px;top:654px;line-height:13px;">Приходные накладные...</div>
<div class="mi" style="left:556px;top:679px;line-height:13px;">Платежи...</div>
<div class="mi" style="left:556px;top:704px;line-height:13px;">Затраты...</div>
<svg style="position:absolute;left:546px;top:565px" width="280" height="116" viewBox="0 0 280 116"><rect x="2.5" y="2.5" width="273.5" height="110" rx="28" ry="28" fill="none" stroke="#ff0000" stroke-width="5"/></svg></body></html>
